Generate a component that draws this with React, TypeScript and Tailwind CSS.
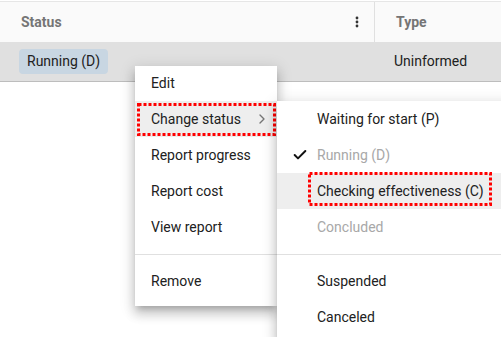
import { Check, ChevronRight } from 'lucide-react'

const font = { fontFamily: 'Roboto, "Liberation Sans", sans-serif' }

const menuShadow =
  'shadow-[0_5px_6px_-3px_rgba(0,0,0,0.2),0_8px_10px_1px_rgba(0,0,0,0.14),0_3px_14px_2px_rgba(0,0,0,0.12)]'

// red dotted focus outline drawn over the highlighted item
function DottedBox({ w, h }: { w: number; h: number }) {
  return (
    <svg className="pointer-events-none" width={w} height={h}>
      <rect x={1.5} y={1.5} width={w - 3} height={h - 3} fill="none" stroke="#ff0000" strokeWidth={3} strokeDasharray="3 2" />
    </svg>
  )
}

function SubItem({ label, disabled, checked }: { label: string; disabled?: boolean; checked?: boolean }) {
  return (
    <div className={`flex h-[36px] items-center ${disabled ? 'text-[#a8a8a8]' : ''}`}>
      <span className="flex w-[40px] justify-end pr-[9px]">
        {checked && <Check size={16} strokeWidth={3} className="text-[#111]" />}
      </span>
      {label}
    </div>
  )
}

export default function App() {
  return (
    <div className="relative h-[337px] w-[501px] overflow-hidden bg-white text-[14px] text-[#212121]" style={font}>
      {/* table */}
      <div className="mt-px border-t border-[#e6e6e6]">
        <div className="flex h-[40px] bg-[#fafafa] font-bold text-[#757575]">
          <div className="flex w-[375px] items-center justify-between border-r border-[#e0e0e0] pl-[21px] pr-[15px]">
            <span>Status</span>
            <svg width="4" height="12" viewBox="0 0 4 12">
              <circle cx="2" cy="2" r="1.4" fill="#333" />
              <circle cx="2" cy="6" r="1.4" fill="#333" />
              <circle cx="2" cy="10" r="1.4" fill="#333" />
            </svg>
          </div>
          <div className="flex items-center pl-[21px]">Type</div>
        </div>
        <div className="flex h-[40px] items-center border-b border-[#bdbdbd] bg-[#e0e0e0]">
          <div className="w-[374px] pl-[19px]">
            <span className="inline-flex h-[25px] items-center rounded-[4px] bg-[#c8d6e2] px-[8px]">Running (D)</span>
          </div>
          <div className="pl-[20px]">Uninformed</div>
        </div>
      </div>

      {/* context menu */}
      <div className={`absolute left-[135px] top-[66px] w-[142px] bg-white pb-[7px] ${menuShadow}`}>
        <div className="flex h-[35px] items-center pl-[16px]">Edit</div>
        <div className="relative flex h-[36px] items-center justify-between bg-[#eeeeee] pl-[16px] pr-[7px]">
          <span>Change status</span>
          <ChevronRight size={16} strokeWidth={2} className="text-[#757575]" />
          <div className="absolute left-[2px] top-[2px]">
            <DottedBox w={139} h={33} />
          </div>
        </div>
        <div className="flex h-[36px] items-center pl-[16px]">Report progress</div>
        <div className="flex h-[36px] items-center pl-[16px]">Report cost</div>
        <div className="flex h-[36px] items-center pl-[16px]">View report</div>
        <div className="mb-[8px] mt-[9px] h-px bg-[#e0e0e0]" />
        <div className="flex h-[36px] items-center pl-[16px]">Remove</div>
      </div>

      {/* submenu */}
      <div className={`absolute left-[277px] top-[101px] w-[240px] bg-white pb-[7px] ${menuShadow}`}>
        <SubItem label="Waiting for start (P)" />
        <SubItem label="Running (D)" disabled checked />
        <div className="relative bg-[#eeeeee]">
          <SubItem label="Checking effectiveness (C)" />
          <div className="absolute left-[31px] top-[-1px]">
            <DottedBox w={184} h={34} />
          </div>
        </div>
        <SubItem label="Concluded" disabled />
        <div className="mb-[8px] mt-[9px] h-px bg-[#e0e0e0]" />
        <SubItem label="Suspended" />
        <SubItem label="Canceled" />
      </div>
    </div>
  )
}
